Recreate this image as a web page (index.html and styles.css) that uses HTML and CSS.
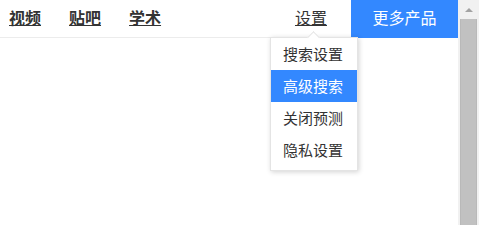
FILE: index.html
```html
<!DOCTYPE html>
<html lang="zh-CN">
<head>
<meta charset="utf-8">
<title>设置</title>
<link rel="stylesheet" href="styles.css">
</head>
<body>
<div class="page">
  <div class="main">
    <header class="topbar">
      <nav class="nav">
        <a class="nav-link" href="#">视频</a>
        <a class="nav-link" href="#">贴吧</a>
        <a class="nav-link" href="#">学术</a>
      </nav>
      <div class="right">
        <div class="setting">
          <a class="setting-link" href="#">设置</a>
          <div class="menu">
            <span class="menu-arrow"></span>
            <a class="menu-item" href="#">搜索设置</a>
            <a class="menu-item active" href="#">高级搜索</a>
            <a class="menu-item" href="#">关闭预测</a>
            <a class="menu-item" href="#">隐私设置</a>
          </div>
        </div>
        <a class="more" href="#">更多产品</a>
      </div>
    </header>
  </div>
  <div class="scrollbar">
    <div class="scroll-up"><span class="up-arrow"></span></div>
    <div class="scroll-thumb"></div>
  </div>
</div>
</body>
</html>
```

FILE: styles.css
```css
html, body {
  margin: 0;
  padding: 0;
  height: 100%;
  overflow: hidden;
  background: #fff;
}
body {
  font-family: "Noto Sans CJK SC", "Noto Sans", sans-serif;
  color: #333;
}
.page {
  display: flex;
  height: 225px;
}
.main {
  flex: 1;
  min-width: 0;
}
.topbar {
  height: 37px;
  border-bottom: 1px solid #ececec;
  display: flex;
  justify-content: space-between;
  align-items: stretch;
}
.nav {
  display: flex;
  align-items: center;
  gap: 28px;
  padding-left: 9px;
}
.nav-link {
  font-size: 16px;
  font-weight: bold;
  color: #333;
  text-decoration: underline;
  line-height: 34px;
  height: 37px;
}
.right {
  display: flex;
  align-items: stretch;
}
.setting {
  position: relative;
  margin-right: 24px;
}
.setting-link {
  display: block;
  font-size: 16px;
  color: #333;
  text-decoration: underline;
  line-height: 34px;
}
.more {
  width: 107px;
  height: 38px;
  background: #3388ff;
  color: #fff;
  font-size: 16px;
  text-decoration: none;
  text-align: center;
  line-height: 35px;
}
.menu {
  position: absolute;
  top: 37px;
  left: -25px;
  width: 86px;
  padding: 0 0 4px;
  background: #fff;
  border: 1px solid #e4e4e4;
  box-shadow: 1px 1px 5px rgba(0, 0, 0, 0.18);
  display: flex;
  flex-direction: column;
  z-index: 5;
}
.menu-arrow {
  position: absolute;
  top: -5px;
  left: 38px;
  width: 8px;
  height: 8px;
  background: #fff;
  border-left: 1px solid #e4e4e4;
  border-top: 1px solid #e4e4e4;
  transform: rotate(45deg);
}
.menu-item {
  position: relative;
  display: block;
  height: 32px;
  line-height: 32px;
  padding-left: 12px;
  font-size: 15px;
  color: #333;
  text-decoration: none;
}
.menu-item.active {
  background: #3388ff;
  color: #fff;
}
.scrollbar {
  width: 21px;
  flex: none;
  background: #f1f1f1;
  display: flex;
  flex-direction: column;
  align-items: center;
}
.scroll-up {
  height: 19px;
  width: 100%;
  display: flex;
  justify-content: center;
  padding-top: 8px;
  box-sizing: border-box;
}
.up-arrow {
  width: 0;
  height: 0;
  border-left: 4px solid transparent;
  border-right: 4px solid transparent;
  border-bottom: 4px solid #a3a3a3;
}
.scroll-thumb {
  width: 17px;
  flex: 1;
  margin-left: 2px;
  margin-right: 2px;
  background: #c1c1c1;
  border-left: 1px solid #b9b9b9;
  border-right: 1px solid #b9b9b9;
  box-sizing: border-box;
}
```
